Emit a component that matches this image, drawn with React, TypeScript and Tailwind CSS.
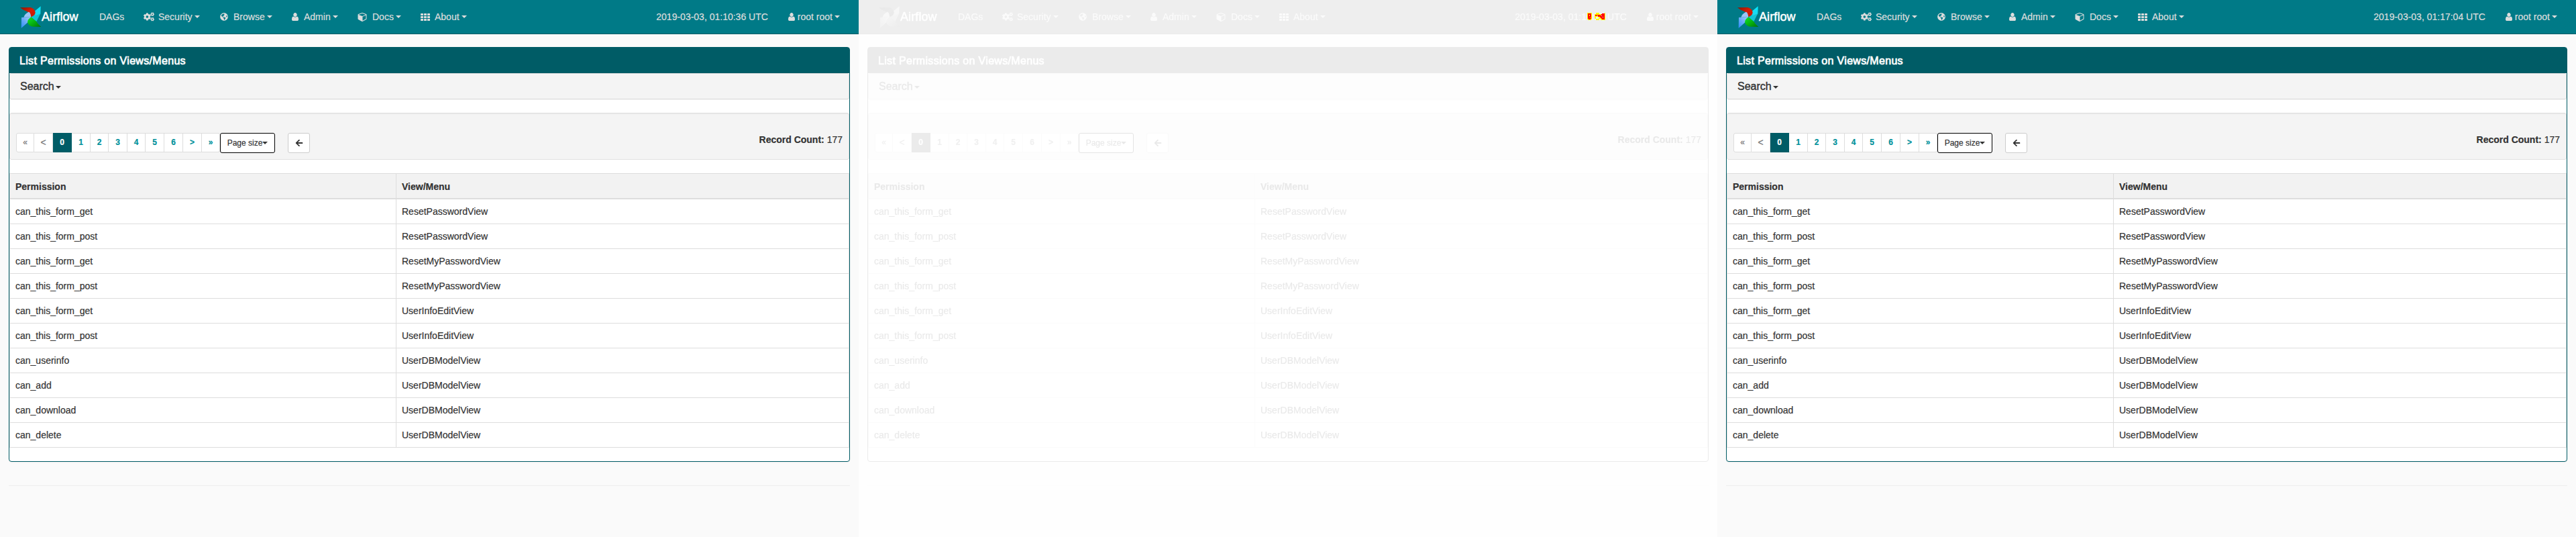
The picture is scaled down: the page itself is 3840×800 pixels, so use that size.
import React from "react";
import { FaCogs, FaGlobeAmericas, FaArrowLeft } from "react-icons/fa";

const rows = [
  ["can_this_form_get", "ResetPasswordView"],
  ["can_this_form_post", "ResetPasswordView"],
  ["can_this_form_get", "ResetMyPasswordView"],
  ["can_this_form_post", "ResetMyPasswordView"],
  ["can_this_form_get", "UserInfoEditView"],
  ["can_this_form_post", "UserInfoEditView"],
  ["can_userinfo", "UserDBModelView"],
  ["can_add", "UserDBModelView"],
  ["can_download", "UserDBModelView"],
  ["can_delete", "UserDBModelView"],
];

const Caret = ({ className = "" }: { className?: string }) => (
  <span className={`inline-block h-0 w-0 border-x-4 border-t-4 border-x-transparent border-t-current ${className}`} />
);

const Logo = () => (
  <svg width="36" height="36" viewBox="27 21 108 108" className="shrink-0">
    <defs>
      <linearGradient id="red" x1="0" y1="0" x2="1" y2="1">
        <stop offset="0" stopColor="#8a1400" />
        <stop offset="0.5" stopColor="#d81e05" />
        <stop offset="1" stopColor="#c01a04" />
      </linearGradient>
      <linearGradient id="cyan" x1="1" y1="0" x2="0" y2="1">
        <stop offset="0" stopColor="#00e8ff" />
        <stop offset="0.6" stopColor="#22d8ee" />
        <stop offset="1" stopColor="#00a8b8" />
      </linearGradient>
      <linearGradient id="green" x1="0" y1="0" x2="1" y2="1">
        <stop offset="0" stopColor="#10e828" />
        <stop offset="0.6" stopColor="#04a80c" />
        <stop offset="1" stopColor="#047008" />
      </linearGradient>
      <linearGradient id="blue" x1="1" y1="0" x2="0" y2="1">
        <stop offset="0" stopColor="#a8ccf8" />
        <stop offset="1" stopColor="#2c8cf8" />
      </linearGradient>
    </defs>
    <path d="M122 28 L121 62 L104 76 L79 76 L93 52 Z" fill="url(#cyan)" />
    <path d="M121 60 L96 71 L79 76 L103 97 Z" fill="#12c4d4" />
    <path d="M30 34 L76 33 Q94 38 98 54 Q99 68 79 76 Q76 60 62 52 Q44 46 30 34 Z" fill="url(#red)" />
    <path d="M79 76 Q76 54 68 53 Q50 62 46 77 Z" fill="#9cc4f4" />
    <path d="M36 78 L79 76 L66 98 L35 126 Z" fill="url(#blue)" />
    <path d="M79 76 Q60 90 64 102 Q70 118 88 119 L124 120 Q108 106 103 96 Q94 90 79 76 Z" fill="url(#green)" />
  </svg>
);

const User = () => (
  <svg width="10" height="12" viewBox="0 128 1408 1536" preserveAspectRatio="none" fill="currentColor" className="shrink-0">
    <path d="M1408 1405q0 120-73 189.500t-194 69.500h-874q-121 0-194-69.500t-73-189.500q0-53 3.500-103.500t14-109 26.500-108.500 43-97.500 62-81 85.500-53.500 111.500-20q9 0 42 21.500t74.500 48 108 48 133.500 21.500 133.500-21.500 108-48 74.500-48 42-21.500q61 0 111.500 20t85.500 53.500 62 81 43 97.500 26.500 108.500 14 109 3.500 103.500zM1088 512q0 159-112.500 271.500t-271.500 112.500-271.500-112.500-112.500-271.500 112.500-271.500 271.500-112.500 271.500 112.500 112.500 271.500z" />
  </svg>
);

const Cube = () => (
  <svg width="14" height="14" viewBox="0 0 1664 1792" fill="currentColor" fillRule="evenodd">
    <path d="M896 1629l640-349v-636l-640 233v752zM832 764l698-254-698-254-698 254zM1664 512v768q0 35-18 65t-49 47l-704 384q-28 16-61 16t-61-16l-704-384q-31-17-49-47t-18-65v-768q0-40 23-73t61-47l704-256q22-8 44-8t44 8l704 256q38 14 61 47t23 73z" />
  </svg>
);

const Grid = () => (
  <svg width="14" height="11" viewBox="0 0 14 11" fill="currentColor">
    {[0, 4, 8].map((y) => [0, 5, 10].map((x) => <rect key={`${x}-${y}`} x={x} y={y} width="4" height="3" rx="0.5" />))}
  </svg>
);

const menu = [
  { label: "Security", icon: <FaCogs size={16} />, w: "w-[114px]", iw: "w-[22px]" },
  { label: "Browse", icon: <FaGlobeAmericas size={12} />, w: "w-[107px]", iw: "w-[20px]" },
  { label: "Admin", icon: <User />, w: "w-[98px]", iw: "w-[18px]" },
  { label: "Docs", icon: <Cube />, w: "w-[94px]", iw: "w-[22px]" },
  { label: "About", icon: <Grid />, w: "w-[90px]", iw: "w-[21px]" },
];

const pages = [
  ["«", "w-[27px] rounded-l-[3px] border-l border-[#ddd] bg-white text-[#777]"],
  ["<", "w-[28px] border-[#ddd] bg-white text-[14px] text-[#777]"],
  ["0", "w-[28px] border-[#005c66] bg-[#005c66] font-bold text-white"],
  ["1", "w-[28px] border-[#ddd] bg-white font-bold text-[#00919b]"],
  ["2", "w-[27px] border-[#ddd] bg-white font-bold text-[#00919b]"],
  ["3", "w-[28px] border-[#ddd] bg-white font-bold text-[#00919b]"],
  ["4", "w-[27px] border-[#ddd] bg-white font-bold text-[#00919b]"],
  ["5", "w-[28px] border-[#ddd] bg-white font-bold text-[#00919b]"],
  ["6", "w-[28px] border-[#ddd] bg-white font-bold text-[#00919b]"],
  [">", "w-[28px] border-[#ddd] bg-white font-bold text-[#00919b]"],
  ["»", "w-[27px] rounded-r-[3px] border-[#ddd] bg-white font-bold text-[#00919b]"],
];

function Page({ time }: { time: string }) {
  return (
    <div className="h-[800px] w-[1280px] bg-[#fafafa] text-[14px] leading-5 text-[#333] [-webkit-text-stroke:0.2px]">
      <header className="flex h-[51px] items-center border-b border-[#005c66] bg-[#007a87] pl-[29px] pr-[28px] text-[#ddd]">
        <Logo />
        <span className="-ml-[3px] w-[86px] text-[18px] tracking-[0.1px] text-white [-webkit-text-stroke:0.5px]">Airflow</span>
        <span className="w-[66px]">DAGs</span>
        {menu.map((m) => (
          <span key={m.label} className={`flex items-center ${m.w}`}>
            <span className={`shrink-0 ${m.iw}`}>{m.icon}</span>
            {m.label}
            <Caret className="ml-[3px]" />
          </span>
        ))}
        <span className="ml-auto whitespace-nowrap">{time}</span>
        <span className="ml-[30px] flex items-center gap-1">
          <User />
          root root
          <Caret className="-ml-px" />
        </span>
      </header>
      <main className="px-[13px] pt-[19px]">
        <section className="h-[618px] rounded border border-[#005c66] bg-white shadow-[0_1px_1px_rgba(0,0,0,0.05)]">
          <h1 className="h-[38px] bg-[#005c66] pl-[15px] text-[16px] leading-[39px] tracking-[0.32px] text-white [-webkit-text-stroke:0.7px]">
            List Permissions on Views/Menus
          </h1>
          <div className="flex h-[39px] items-center rounded-[3px] border border-[#ddd] bg-[#f4f4f4] pl-[15px] pt-px text-[16px] shadow-[0_1px_1px_rgba(0,0,0,0.05)] [-webkit-text-stroke:0.4px]">
            Search
            <Caret className="ml-[2px] mt-[2px]" />
          </div>
          <div className="mt-5 flex h-[70px] items-start rounded-[3px] border border-[#e0e0e0] bg-[#f4f4f4] pl-[9px] pr-[9px] pt-[29px] text-[12px] shadow-[inset_0_1px_1px_rgba(0,0,0,0.05)]">
            <ul className="flex">
              {pages.map(([label, cls]) => (
                <li key={label} className={`flex h-[29px] items-center justify-center border-y border-r pb-px ${cls}`}>
                  {label}
                </li>
              ))}
            </ul>
            <button className="flex h-[30px] w-[82px] items-center justify-center rounded-[3px] border border-black bg-white">
              Page size
              <Caret />
            </button>
            <button className="ml-[19px] flex h-[30px] w-[33px] items-center justify-center rounded-[3px] border border-[#ccc] bg-white">
              <FaArrowLeft size={12} />
            </button>
            <p className="ml-auto text-[14px]">
              <b>Record Count:</b> 177
            </p>
          </div>
          <div className="mt-5 border border-[#ddd]">
            <div className="flex h-[38px] border-b-2 border-[#ddd] bg-[#f2f2f2] font-bold">
              <span className="w-[576px] border-r border-[#ddd] pl-2 pt-[9px]">Permission</span>
              <span className="pl-2 pt-[9px]">View/Menu</span>
            </div>
            {rows.map(([permission, view], i) => (
              <div key={i} className={`flex ${i === rows.length - 1 ? "h-[36px]" : "h-[37px] border-b border-[#ddd]"}`}>
                <span className="w-[576px] border-r border-[#ddd] pl-2 pt-2">{permission}</span>
                <span className="pl-2 pt-2">{view}</span>
              </div>
            ))}
          </div>
        </section>
        <hr className="mt-[35px] border-[#eee]" />
      </main>
    </div>
  );
}

const DiffMarks = () => (
  <svg width="30" height="14" viewBox="0 0 30 14" shapeRendering="crispEdges" className="absolute left-[1085px] top-[18px]">
    <path d="M1 1H8V10L6 12H2L1 11Z" fill="#ff0" />
    <path d="M2 2H7V9L5 11H3L2 10Z" fill="#f00" />
    <path d="M4 4H5V6H4ZM5 8H6V9H5Z" fill="#ff0" />
    <path d="M14 1H19V3H27V1H28V12H21V10H19V12H14V10H12V3H14Z" fill="#ff0" />
    <path d="M13 4H20V7H17V5H15V6H13ZM20 5L23 2H27V11H23L20 8Z" fill="#f00" />
    <path d="M14 7H18V10H14ZM22 5H23V6H22ZM24 7H25V8H24Z" fill="#eee" />
  </svg>
);

export default function App() {
  return (
    <div className="flex w-[3840px] bg-white font-['Liberation_Sans',Arial,sans-serif]">
      <Page time="2019-03-03, 01:10:36 UTC" />
      <div className="relative">
        <div className="opacity-10 grayscale">
          <Page time="2019-03-03, 01:10:36 UTC" />
        </div>
        <DiffMarks />
      </div>
      <Page time="2019-03-03, 01:17:04 UTC" />
    </div>
  );
}
